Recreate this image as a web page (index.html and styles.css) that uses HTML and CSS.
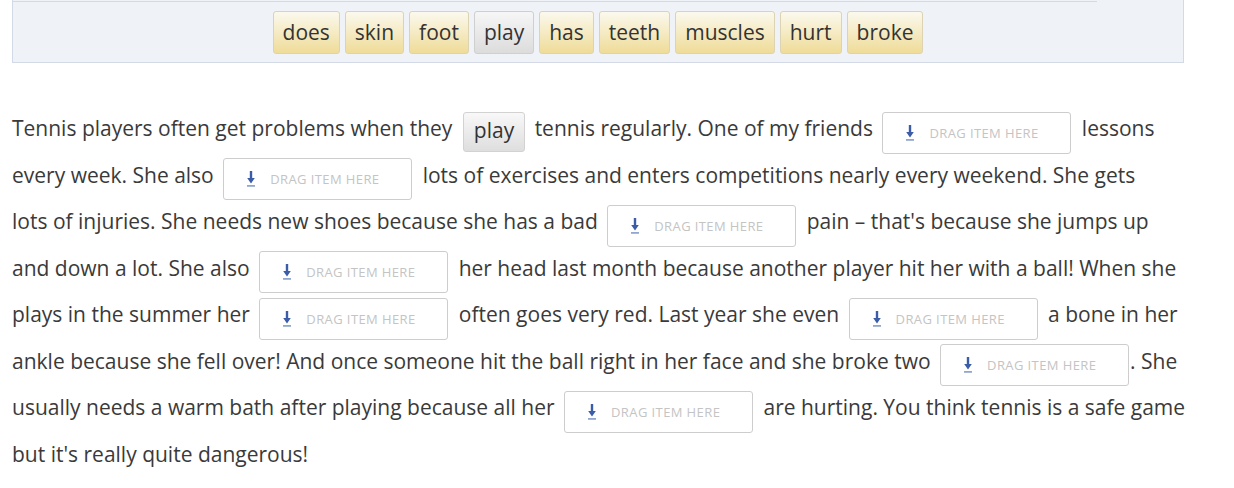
FILE: index.html
```html
<!doctype html>
<html lang="en">
<head>
	<meta charset="UTF-8">
	<title>Drag and drop</title>
	<link rel="stylesheet" href="styles.css">
</head>
<body>
	<div class="page">
		<div class="bank">
			<div class="bank-top"></div>
			<ul class="tiles">
				<li class="tile">does</li>
				<li class="tile">skin</li>
				<li class="tile">foot</li>
				<li class="tile used">play</li>
				<li class="tile">has</li>
				<li class="tile">teeth</li>
				<li class="tile">muscles</li>
				<li class="tile">hurt</li>
				<li class="tile">broke</li>
			</ul>
		</div>

		<p class="story">
			Tennis players often get problems when they <span class="placed">play</span> tennis regularly. One of my friends
			<span class="drop"><svg class="arrow" viewBox="0 0 10 18" width="10" height="18"><path d="M3.8 1h2.4v7h2.6L5 13.5 1.2 8h2.6z" fill="#3b5da8"/><rect x="1" y="15" width="8" height="1.8" fill="#3b5da8" opacity=".55"/></svg>DRAG ITEM HERE</span>
			lessons every week. She also
			<span class="drop"><svg class="arrow" viewBox="0 0 10 18" width="10" height="18"><path d="M3.8 1h2.4v7h2.6L5 13.5 1.2 8h2.6z" fill="#3b5da8"/><rect x="1" y="15" width="8" height="1.8" fill="#3b5da8" opacity=".55"/></svg>DRAG ITEM HERE</span>
			lots of exercises and enters competitions nearly every weekend. She gets <span class="keep">lots of</span> injuries. She needs new shoes because she has a bad
			<span class="drop"><svg class="arrow" viewBox="0 0 10 18" width="10" height="18"><path d="M3.8 1h2.4v7h2.6L5 13.5 1.2 8h2.6z" fill="#3b5da8"/><rect x="1" y="15" width="8" height="1.8" fill="#3b5da8" opacity=".55"/></svg>DRAG ITEM HERE</span>
			pain – that's because she jumps up and down a lot. She also
			<span class="drop"><svg class="arrow" viewBox="0 0 10 18" width="10" height="18"><path d="M3.8 1h2.4v7h2.6L5 13.5 1.2 8h2.6z" fill="#3b5da8"/><rect x="1" y="15" width="8" height="1.8" fill="#3b5da8" opacity=".55"/></svg>DRAG ITEM HERE</span>
			her head last month because another player hit her with a ball! When she plays in the summer her
			<span class="drop"><svg class="arrow" viewBox="0 0 10 18" width="10" height="18"><path d="M3.8 1h2.4v7h2.6L5 13.5 1.2 8h2.6z" fill="#3b5da8"/><rect x="1" y="15" width="8" height="1.8" fill="#3b5da8" opacity=".55"/></svg>DRAG ITEM HERE</span>
			often goes very red. Last year she even
			<span class="drop"><svg class="arrow" viewBox="0 0 10 18" width="10" height="18"><path d="M3.8 1h2.4v7h2.6L5 13.5 1.2 8h2.6z" fill="#3b5da8"/><rect x="1" y="15" width="8" height="1.8" fill="#3b5da8" opacity=".55"/></svg>DRAG ITEM HERE</span>
			a bone in her ankle because she fell over! And once someone hit the ball right in her face and she broke two
			<span class="drop tight"><svg class="arrow" viewBox="0 0 10 18" width="10" height="18"><path d="M3.8 1h2.4v7h2.6L5 13.5 1.2 8h2.6z" fill="#3b5da8"/><rect x="1" y="15" width="8" height="1.8" fill="#3b5da8" opacity=".55"/></svg>DRAG ITEM HERE</span>. She usually needs a warm bath after playing because all her
			<span class="drop"><svg class="arrow" viewBox="0 0 10 18" width="10" height="18"><path d="M3.8 1h2.4v7h2.6L5 13.5 1.2 8h2.6z" fill="#3b5da8"/><rect x="1" y="15" width="8" height="1.8" fill="#3b5da8" opacity=".55"/></svg>DRAG ITEM HERE</span>
			are hurting. You think tennis is a safe game but it's really quite dangerous!
		</p>
	</div>
</body>
</html>
```

FILE: styles.css
```css
body {
	margin: 0;
	padding: 0;
	background: #fff;
	font-family: "Open Sans", "Noto Sans", sans-serif;
	color: #3a3a3a;
}
.page {
	padding: 0 12px;
	width: 1178px;
}
.bank {
	width: 1170px;
	height: 62px;
	background: #eff2f7;
	border: 1px solid #d3d9e6;
	border-top: none;
}
.bank-top {
	height: 1px;
	margin-right: 86px;
	border-bottom: 1px solid #d3d9e6;
}
.tiles {
	margin: 9px 0 0;
	padding: 0;
	list-style: none;
	display: flex;
	justify-content: center;
	gap: 5px;
}
.tile {
	height: 41px;
	line-height: 41px;
	padding: 0 9px;
	font-size: 21px;
	color: #333;
	border: 1px solid #dcd3b4;
	border-radius: 3px;
	background: linear-gradient(#fbf9ee, #efdc98);
}
.tile.used {
	border-color: #cfcfcf;
	background: linear-gradient(#f6f6f6, #dcdcdc);
}
.story {
	margin: 44px 0 0;
	font-size: 21px;
	line-height: 42.2px;
}
.keep {
	white-space: nowrap;
}
.placed {
	display: inline-block;
	line-height: 34px;
	padding: 0 10px 4px;
	margin: 0 4px 0 5px;
	font-size: 21px;
	color: #333;
	vertical-align: -1.7px;
	border: 1px solid #d2d2d2;
	border-radius: 3px;
	background: linear-gradient(#f8f8f8, #dedede);
}
.drop {
	display: inline-block;
	box-sizing: border-box;
	width: 189px;
	height: 42px;
	padding-left: 22px;
	margin: 0 5px 0 4px;
	vertical-align: -1.5px;
	border: 1px solid #cdcdcd;
	border-radius: 3px;
	font-size: 13px;
	letter-spacing: 0.4px;
	line-height: 40px;
	color: #c4c4c4;
	white-space: nowrap;
}
.drop.tight {
	margin-right: 1px;
}
.arrow {
	vertical-align: middle;
	margin: -3px 14px 0 0;
}
```
